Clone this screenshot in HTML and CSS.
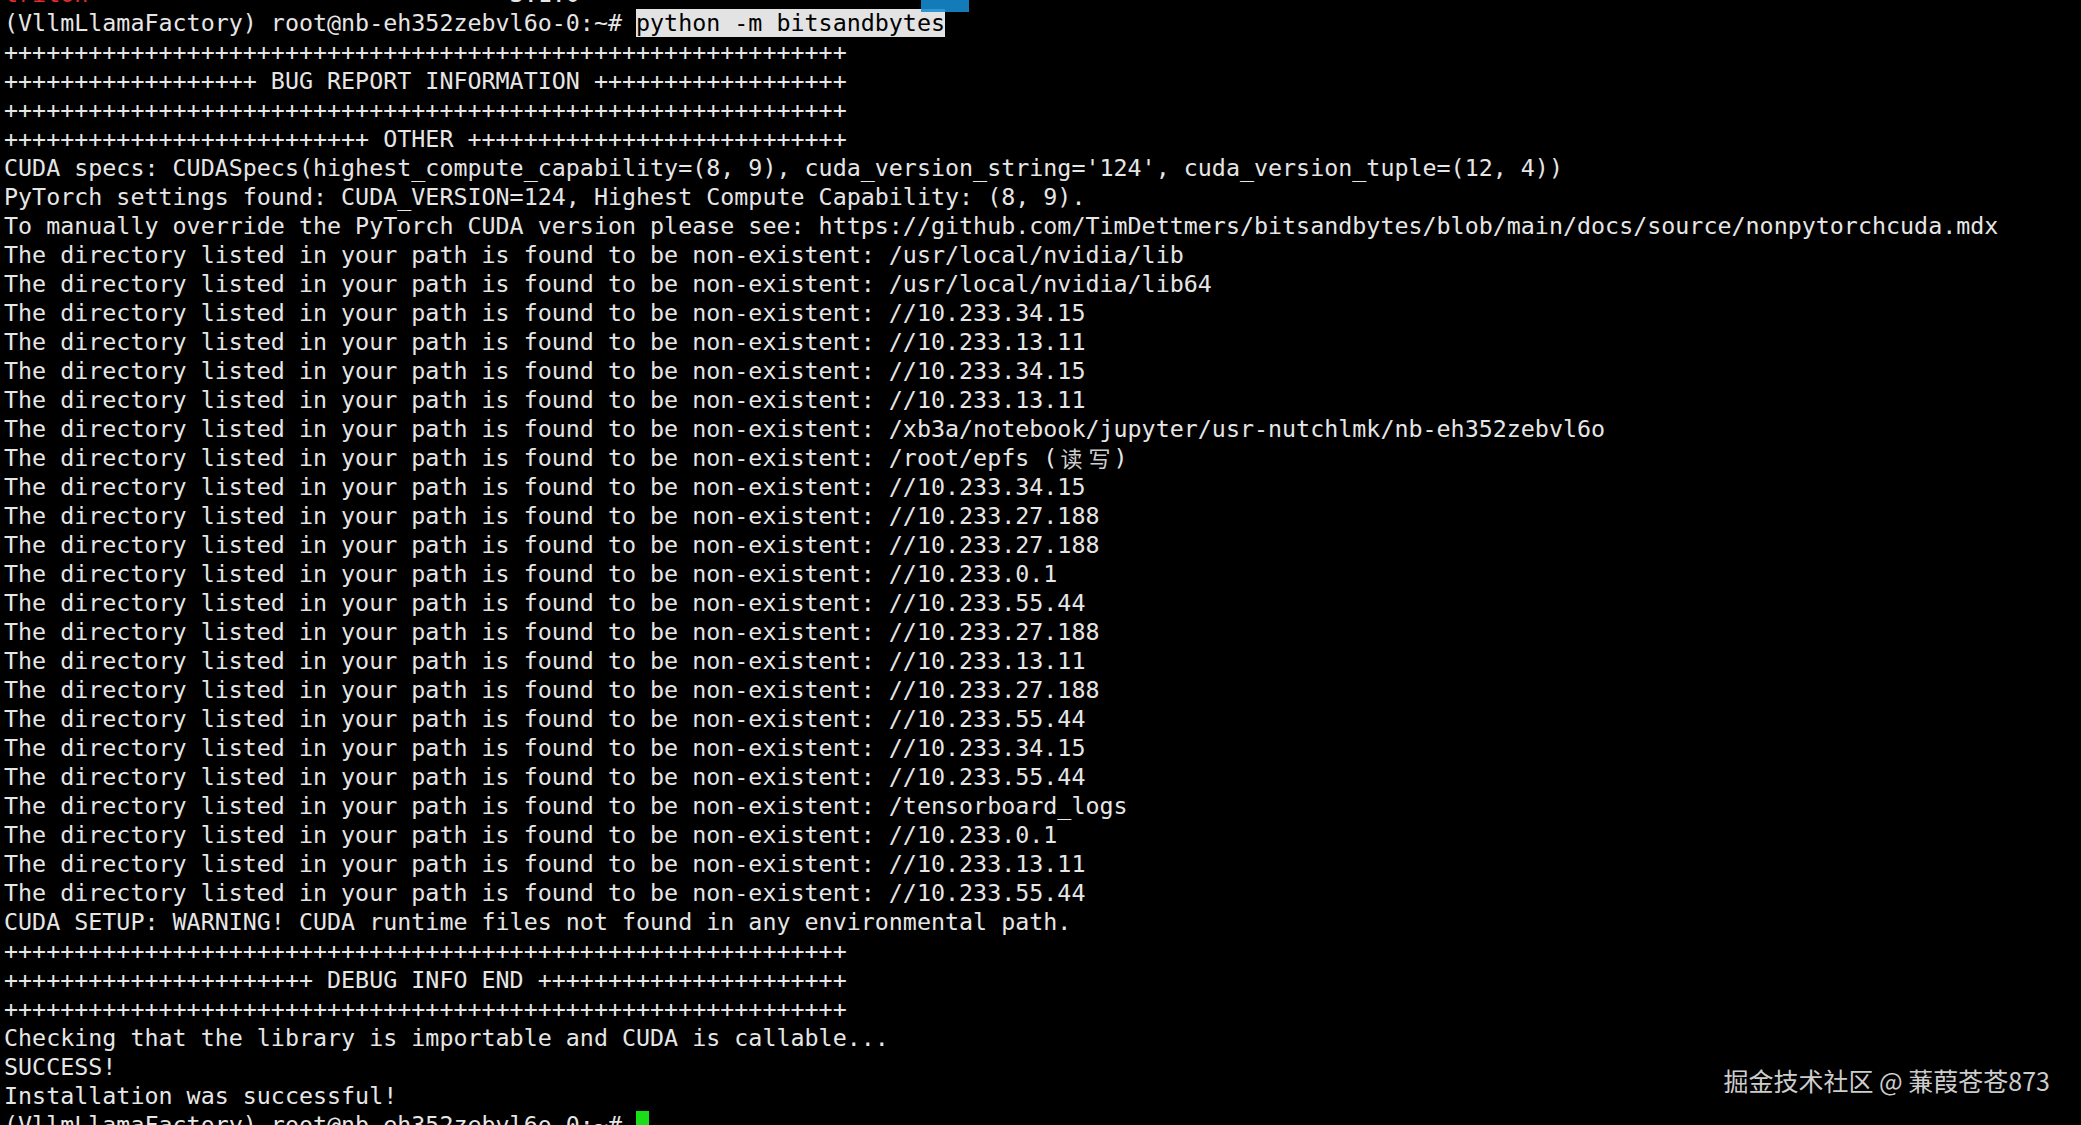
FILE: index.html
```html
<!DOCTYPE html>
<html lang="en">
<head>
<meta charset="utf-8">
<title>Terminal</title>
<link rel="stylesheet" href="styles.css">
</head>
<body>
<div class="screen">
  <div class="term">
    <div class="partial"><div class="line"><span class="red">triton</span>                              <span>3.1.0</span></div></div>
    <div class="line">(VllmLlamaFactory) root@nb-eh352zebvl6o-0:~# <span class="sel">python -m bitsandbytes</span></div>
    <div class="line">++++++++++++++++++++++++++++++++++++++++++++++++++++++++++++</div>
    <div class="line">++++++++++++++++++ BUG REPORT INFORMATION ++++++++++++++++++</div>
    <div class="line">++++++++++++++++++++++++++++++++++++++++++++++++++++++++++++</div>
    <div class="line">++++++++++++++++++++++++++ OTHER +++++++++++++++++++++++++++</div>
    <div class="line">CUDA specs: CUDASpecs(highest_compute_capability=(8, 9), cuda_version_string='124', cuda_version_tuple=(12, 4))</div>
    <div class="line">PyTorch settings found: CUDA_VERSION=124, Highest Compute Capability: (8, 9).</div>
    <div class="line">To manually override the PyTorch CUDA version please see: https://github.com/TimDettmers/bitsandbytes/blob/main/docs/source/nonpytorchcuda.mdx</div>
    <div class="line">The directory listed in your path is found to be non-existent: /usr/local/nvidia/lib</div>
    <div class="line">The directory listed in your path is found to be non-existent: /usr/local/nvidia/lib64</div>
    <div class="line">The directory listed in your path is found to be non-existent: //10.233.34.15</div>
    <div class="line">The directory listed in your path is found to be non-existent: //10.233.13.11</div>
    <div class="line">The directory listed in your path is found to be non-existent: //10.233.34.15</div>
    <div class="line">The directory listed in your path is found to be non-existent: //10.233.13.11</div>
    <div class="line">The directory listed in your path is found to be non-existent: /xb3a/notebook/jupyter/usr-nutchlmk/nb-eh352zebvl6o</div>
    <div class="line">The directory listed in your path is found to be non-existent: /root/epfs (<span class="wide">读</span><span class="wide">写</span>)</div>
    <div class="line">The directory listed in your path is found to be non-existent: //10.233.34.15</div>
    <div class="line">The directory listed in your path is found to be non-existent: //10.233.27.188</div>
    <div class="line">The directory listed in your path is found to be non-existent: //10.233.27.188</div>
    <div class="line">The directory listed in your path is found to be non-existent: //10.233.0.1</div>
    <div class="line">The directory listed in your path is found to be non-existent: //10.233.55.44</div>
    <div class="line">The directory listed in your path is found to be non-existent: //10.233.27.188</div>
    <div class="line">The directory listed in your path is found to be non-existent: //10.233.13.11</div>
    <div class="line">The directory listed in your path is found to be non-existent: //10.233.27.188</div>
    <div class="line">The directory listed in your path is found to be non-existent: //10.233.55.44</div>
    <div class="line">The directory listed in your path is found to be non-existent: //10.233.34.15</div>
    <div class="line">The directory listed in your path is found to be non-existent: //10.233.55.44</div>
    <div class="line">The directory listed in your path is found to be non-existent: /tensorboard_logs</div>
    <div class="line">The directory listed in your path is found to be non-existent: //10.233.0.1</div>
    <div class="line">The directory listed in your path is found to be non-existent: //10.233.13.11</div>
    <div class="line">The directory listed in your path is found to be non-existent: //10.233.55.44</div>
    <div class="line">CUDA SETUP: WARNING! CUDA runtime files not found in any environmental path.</div>
    <div class="line">++++++++++++++++++++++++++++++++++++++++++++++++++++++++++++</div>
    <div class="line">++++++++++++++++++++++ DEBUG INFO END ++++++++++++++++++++++</div>
    <div class="line">++++++++++++++++++++++++++++++++++++++++++++++++++++++++++++</div>
    <div class="line">Checking that the library is importable and CUDA is callable...</div>
    <div class="line">SUCCESS!</div>
    <div class="line">Installation was successful!</div>
    <div class="line">(VllmLlamaFactory) root@nb-eh352zebvl6o-0:~# <span class="cursor"> </span></div>
  </div>
  <div class="blue-tab"></div>
  <div class="watermark">掘金技术社区 @ 蒹葭苍苍873</div>
</div>
</body>
</html>
```
FILE: styles.css
```css
html, body {
  margin: 0;
  padding: 0;
  background: #000;
  overflow: hidden;
}
.screen {
  position: relative;
  width: 2081px;
  height: 1125px;
  overflow: hidden;
  background: #000;
}
.term {
  display: flex;
  flex-direction: column;
  padding-left: 4px;
  font-family: "DejaVu Sans Mono", "Noto Sans CJK SC", monospace;
  font-size: 23.34px;
  color: #e6e6e6;
}
.line {
  height: 29px;
  line-height: 29px;
  white-space: pre;
  flex: none;
}
.partial {
  height: 9px;
  overflow: hidden;
  display: flex;
  flex-direction: column;
  justify-content: flex-end;
  flex: none;
}
.red {
  color: #e22b2b;
}
.sel {
  background: #e3e3e3;
  color: #000;
}
.wide {
  display: inline-block;
  width: 28.1px;
  text-align: center;
  font-family: "Noto Sans CJK SC", sans-serif;
  font-size: 22px;
  line-height: 27px;
  vertical-align: top;
  color: #cfcfcf;
}
.cursor {
  display: inline-block;
  width: 13px;
  height: 29px;
  vertical-align: top;
  background: #18e018;
}
.blue-tab {
  position: absolute;
  left: 921px;
  top: 0;
  width: 48px;
  height: 12px;
  background: rgba(20, 140, 210, 0.88);
}
.watermark {
  position: absolute;
  right: 31px;
  bottom: 30px;
  font-family: "Noto Sans CJK SC", sans-serif;
  font-size: 25px;
  color: #cdcdcd;
  line-height: 30px;
}
```
